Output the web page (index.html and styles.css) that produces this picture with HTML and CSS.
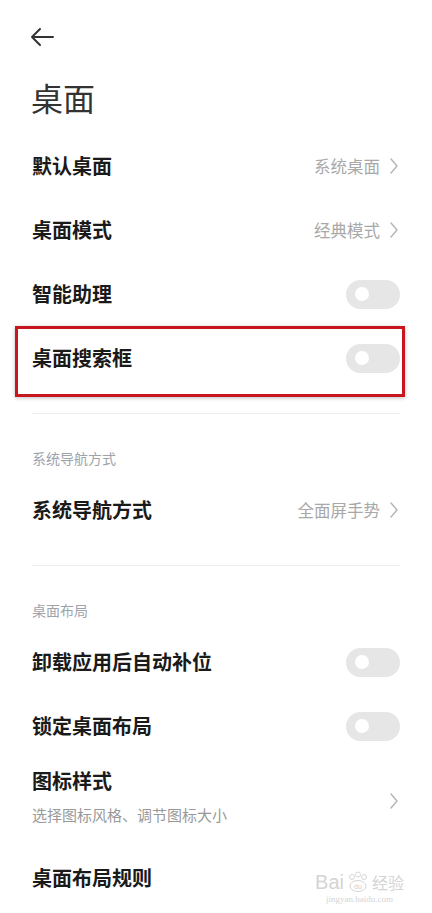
FILE: index.html
```html
<!DOCTYPE html>
<html lang="zh-CN">
<head>
    <meta charset="UTF-8">
    <meta name="viewport" content="width=device-width, initial-scale=1.0">
    <title>桌面</title>
    <link rel="stylesheet" href="styles.css">
</head>
<body>
    <div class="page">
        <div class="topbar">
            <svg class="back" width="26" height="24" viewBox="0 0 26 24">
                <path d="M24 12H3M11 4L3 12L11 20" fill="none" stroke="#333" stroke-width="2" stroke-linecap="round" stroke-linejoin="round"/>
            </svg>
        </div>
        <h1 class="title">桌面</h1>

        <div class="row">
            <span class="label">默认桌面</span>
            <span class="value">系统桌面<svg class="chev" width="8" height="16" viewBox="0 0 8 16"><path d="M1 1L7 8L1 15" fill="none" stroke="#b4b4b4" stroke-width="1.4" stroke-linecap="round" stroke-linejoin="round"/></svg></span>
        </div>
        <div class="row">
            <span class="label">桌面模式</span>
            <span class="value">经典模式<svg class="chev" width="8" height="16" viewBox="0 0 8 16"><path d="M1 1L7 8L1 15" fill="none" stroke="#b4b4b4" stroke-width="1.4" stroke-linecap="round" stroke-linejoin="round"/></svg></span>
        </div>
        <div class="row">
            <span class="label">智能助理</span>
            <span class="toggle"></span>
        </div>
        <div class="row marked">
            <span class="label">桌面搜索框</span>
            <span class="toggle"></span>
        </div>

        <div class="divider"></div>
        <div class="section-title">系统导航方式</div>
        <div class="row">
            <span class="label">系统导航方式</span>
            <span class="value">全面屏手势<svg class="chev" width="8" height="16" viewBox="0 0 8 16"><path d="M1 1L7 8L1 15" fill="none" stroke="#b4b4b4" stroke-width="1.4" stroke-linecap="round" stroke-linejoin="round"/></svg></span>
        </div>

        <div class="divider"></div>
        <div class="section-title">桌面布局</div>
        <div class="row">
            <span class="label">卸载应用后自动补位</span>
            <span class="toggle"></span>
        </div>
        <div class="row">
            <span class="label">锁定桌面布局</span>
            <span class="toggle"></span>
        </div>
        <div class="row tall">
            <div class="texts">
                <span class="label">图标样式</span>
                <span class="sub">选择图标风格、调节图标大小</span>
            </div>
            <svg class="chev" width="8" height="16" viewBox="0 0 8 16"><path d="M1 1L7 8L1 15" fill="none" stroke="#b4b4b4" stroke-width="1.4" stroke-linecap="round" stroke-linejoin="round"/></svg>
        </div>
        <div class="row">
            <span class="label">桌面布局规则</span>
        </div>

        <div class="watermark">
            <div class="wm-top">
                <span>Bai</span>
                <svg width="26" height="22" viewBox="0 0 26 22">
                    <circle cx="7" cy="6" r="2.5" fill="none" stroke="#d6d6d6"/>
                    <circle cx="13" cy="3.5" r="2.5" fill="none" stroke="#d6d6d6"/>
                    <circle cx="19" cy="6" r="2.5" fill="none" stroke="#d6d6d6"/>
                    <ellipse cx="13" cy="15" rx="8" ry="5.5" fill="none" stroke="#d6d6d6"/>
                    <text x="13" y="17.5" font-size="7" text-anchor="middle" fill="#cfcfcf" font-family="Liberation Sans, sans-serif">du</text>
                </svg>
                <span>经验</span>
            </div>
            <div class="wm-url">jingyan.baidu.com</div>
        </div>
    </div>
</body>
</html>
```

FILE: styles.css
```css
body {
    margin: 0;
    background: #fff;
    font-family: "Noto Sans CJK SC", "Noto Sans", sans-serif;
    color: #1a1a1a;
}
.page {
    position: relative;
    width: 432px;
    height: 913px;
    overflow: hidden;
}
.topbar {
    height: 49px;
    padding: 25px 0 0 29px;
    box-sizing: border-box;
}
.back {
    display: block;
}
.title {
    margin: 28px 0 0 31px;
    height: 40px;
    font-size: 32px;
    line-height: 40px;
    font-weight: 400;
    color: #333;
}
.row {
    position: relative;
    display: flex;
    align-items: center;
    justify-content: space-between;
    height: 64px;
    padding: 0 32px;
}
.title + .row {
    margin-top: 17px;
}
.label {
    font-size: 20px;
    font-weight: 700;
    line-height: 26px;
    color: #1a1a1a;
}
.value {
    display: flex;
    align-items: center;
    gap: 10px;
    font-size: 16.5px;
    color: #a8a8a8;
    padding-right: 2px;
}
.chev {
    display: block;
}
.toggle {
    position: relative;
    width: 54px;
    height: 29px;
    border-radius: 15px;
    background: #e6e6e6;
}
.toggle::after {
    content: "";
    position: absolute;
    left: 9px;
    top: 7.5px;
    width: 14px;
    height: 14px;
    border-radius: 50%;
    background: #fff;
}
.marked::after {
    content: "";
    position: absolute;
    top: 0;
    bottom: -7px;
    left: 15px;
    right: 27px;
    border: 3px solid #c8161e;
    box-shadow: 0 1px 4px rgba(0, 0, 0, 0.25);
}
.divider {
    height: 1px;
    margin: 23px 32px 0;
    background: #ededed;
}
.section-title {
    margin-top: 34px;
    padding: 0 32px;
    font-size: 14px;
    line-height: 20px;
    color: #9ea3ab;
}
.section-title + .row {
    margin-top: 10px;
}
.tall {
    height: 88px;
    box-sizing: border-box;
    padding-bottom: 11px;
    padding-right: 34px;
}
.tall .chev {
    margin-top: 8px;
}
.texts {
    display: flex;
    flex-direction: column;
    gap: 11px;
}
.sub {
    font-size: 15px;
    line-height: 20px;
    color: #999;
}
.watermark {
    position: absolute;
    right: 28px;
    bottom: 8px;
    color: #d4d4d4;
    text-align: center;
}
.wm-top {
    display: flex;
    align-items: flex-end;
    gap: 1px;
    font-family: "Liberation Sans", sans-serif;
    font-size: 20px;
    line-height: 22px;
}
.wm-top span:last-child {
    font-family: "Noto Sans CJK SC", sans-serif;
    font-size: 16px;
}
.wm-url {
    font-family: "Liberation Serif", serif;
    font-size: 9px;
    line-height: 12px;
}
```
